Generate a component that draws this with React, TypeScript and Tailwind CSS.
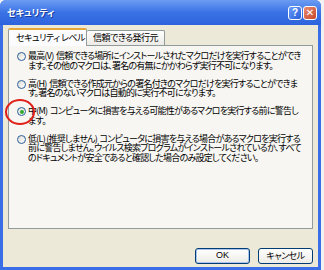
import React from "react";

const jp = "font-['MS_UI_Gothic','Noto_Sans_CJK_JP',sans-serif] [font-feature-settings:'palt']";

function Radio({ checked }: { checked?: boolean }) {
  return (
    <div className="w-[9px] h-[9px] rounded-full border border-[#2a5d98] bg-gradient-to-br from-[#dcdcd6] to-white flex items-center justify-center shrink-0">
      {checked && <div className="w-[4px] h-[4px] rounded-full bg-[#2fa82f]" />}
    </div>
  );
}

function Option({ lines, checked }: { lines: string[]; checked?: boolean }) {
  return (
    <div className="flex items-start gap-[1px]">
      <div className="pt-[1px] w-[10px] shrink-0">
        <Radio checked={checked} />
      </div>
      <div className="flex flex-col tracking-[-0.75px]">
        {lines.map((l, i) => (
          <div key={i} className="whitespace-pre leading-[9.5px] h-[9.5px]">
            {l}
          </div>
        ))}
      </div>
    </div>
  );
}

export default function App() {
  return (
    <div className={`w-[324px] h-[270px] bg-[#f2f2f2] relative overflow-hidden ${jp} text-[9px] text-black`}>
      <div className="w-[321px] h-[270px] flex flex-col bg-[#3a6ee6] rounded-t-[6px]">
        {/* Title bar */}
        <div className="h-[25px] shrink-0 flex items-center justify-between pl-[7px] pr-[4px] rounded-t-[6px] bg-gradient-to-b from-[#6c9cf2] via-[#3a72e6] to-[#2d63dc]">
          <span className="text-white font-bold text-[9px] [text-shadow:1px_1px_0_#1a3c9a] tracking-[0px]">セキュリティ</span>
          <div className="flex gap-[1px] pt-[1px]">
            <div className="w-[14px] h-[14px] rounded-[3px] border border-white bg-gradient-to-br from-[#6a9cf8] to-[#2a5cd8] flex items-center justify-center text-white font-bold text-[10px] leading-none font-['Liberation_Sans',sans-serif]">
              ?
            </div>
            <div className="w-[14px] h-[14px] rounded-[3px] border border-white bg-gradient-to-br from-[#e98b72] to-[#c6452a] flex items-center justify-center text-white font-bold text-[10px] leading-none font-['DejaVu_Sans',sans-serif]">
              ✕
            </div>
          </div>
        </div>
        {/* Body */}
        <div className="flex-1 mx-[3px] mb-[3px] bg-[#ece9d8] flex flex-col px-[5px]">
          {/* Tabs */}
          <div className="flex items-end h-[20px] tracking-[-0.5px]">
            <div className="w-[79px] h-[18px] bg-[#fcfcfe] border border-b-0 border-[#919b9c] border-t-[2px] border-t-[#e8a838] rounded-t-[2px] flex items-center pl-[7px] relative z-10 -mb-[1px] whitespace-nowrap">
              セキュリティ レベル
            </div>
            <div className="h-[15px] w-[78px] bg-gradient-to-b from-white to-[#ecebe6] border border-l-0 border-b-0 border-[#919b9c] rounded-t-[2px] flex items-center pl-[6px] whitespace-nowrap">
              信頼できる発行元
            </div>
          </div>
          {/* Panel */}
          <div className="h-[184px] bg-[#f7f6f2] border border-[#919b9c] pl-[8px] pt-[5px] flex flex-col gap-[8.5px]">
            <Option
              lines={[
                "最高(V)  信頼できる場所にインストールされたマクロだけを実行することができ",
                "ます。その他のマクロは、署名の有無にかかわらず実行不可になります。",
              ]}
            />
            <Option
              lines={[
                "高(H)  信頼できる作成元からの署名付きのマクロだけを実行することができま",
                "す。署名のないマクロは自動的に実行不可になります。",
              ]}
            />
            <Option
              checked
              lines={[
                "中(M)  コンピュータに損害を与える可能性があるマクロを実行する前に警告し",
                "ます。",
              ]}
            />
            <Option
              lines={[
                "低(L) (推奨しません)  コンピュータに損害を与える場合があるマクロを実行する",
                "前に警告しません。ウイルス検索プログラムがインストールされているか、すべて",
                "のドキュメントが安全であると確認した場合のみ設定してください。",
              ]}
            />
          </div>
          {/* Buttons */}
          <div className="flex justify-end gap-[8px] mt-[19px]">
            <div className="w-[55px] h-[16px] rounded-[3px] border border-[#003c74] bg-gradient-to-b from-white to-[#ecebe6] shadow-[inset_0_0_0_1px_#a8c4ef] flex items-center justify-center font-['Liberation_Sans',sans-serif]">
              OK
            </div>
            <div className="w-[55px] h-[16px] rounded-[3px] border border-[#003c74] bg-gradient-to-b from-white to-[#ecebe6] flex items-center justify-center tracking-[-0.5px]">
              キャンセル
            </div>
          </div>
        </div>
      </div>
      {/* Annotation */}
      <svg className="absolute left-0 top-0" width="324" height="270">
        <ellipse cx="20" cy="112" rx="14" ry="12" fill="none" stroke="#e0201a" strokeWidth="2" />
      </svg>
    </div>
  );
}
